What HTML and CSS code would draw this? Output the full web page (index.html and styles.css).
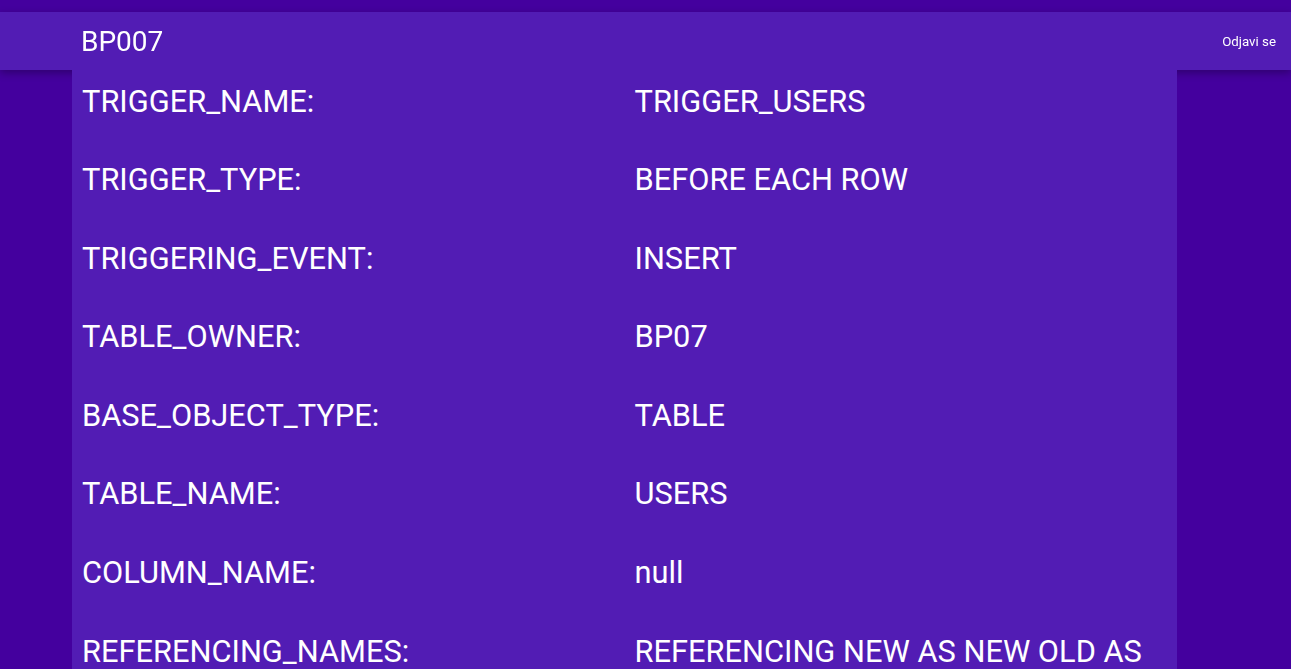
FILE: index.html
```html
<!DOCTYPE html>
<html lang="sr">
<head>
<meta charset="utf-8">
<title>BP007</title>
<link rel="stylesheet" href="styles.css">
</head>
<body>
<header class="topbar">
  <div class="brand">BP007</div>
  <a class="logout" href="#">Odjavi se</a>
</header>
<main class="card">
  <div class="grid">
    <div class="cell">TRIGGER_NAME:</div><div class="cell">TRIGGER_USERS</div>
    <div class="cell">TRIGGER_TYPE:</div><div class="cell">BEFORE EACH ROW</div>
    <div class="cell">TRIGGERING_EVENT:</div><div class="cell">INSERT</div>
    <div class="cell">TABLE_OWNER:</div><div class="cell">BP07</div>
    <div class="cell">BASE_OBJECT_TYPE:</div><div class="cell">TABLE</div>
    <div class="cell">TABLE_NAME:</div><div class="cell">USERS</div>
    <div class="cell">COLUMN_NAME:</div><div class="cell">null</div>
    <div class="cell">REFERENCING_NAMES:</div><div class="cell">REFERENCING NEW AS NEW OLD AS OLD</div>
    <div class="cell">WHEN_CLAUSE:</div><div class="cell">null</div>
    <div class="cell">STATUS:</div><div class="cell">ENABLED</div>
  </div>
</main>
</body>
</html>
```

FILE: styles.css
```css
html, body {
  margin: 0;
  padding: 0;
  background: #44009e;
  font-family: Roboto, "Liberation Sans", sans-serif;
  color: #ffffff;
}

.topbar {
  position: fixed;
  top: 12px;
  left: 0;
  right: 0;
  height: 58px;
  background: #521cb4;
  display: flex;
  align-items: center;
  justify-content: space-between;
  padding: 0 15px 0 81px;
  box-sizing: border-box;
  box-shadow: 0 3px 8px rgba(0, 0, 0, 0.3);
  z-index: 10;
}

.brand {
  font-size: 28px;
  line-height: 1;
  padding-top: 1px;
}

.logout {
  color: #ffffff;
  text-decoration: none;
  font-size: 13.3px;
  padding-top: 1px;
}

.card {
  position: relative;
  z-index: 11;
  margin: 70px 0 0 72px;
  width: 1105px;
  background: #521cb4;
  min-height: 800px;
}

.grid {
  display: grid;
  grid-template-columns: 1fr 1fr;
  margin-top: -7.5px;
}

.cell {
  font-size: 30.8px;
  line-height: 38.6px;
  padding: 20px 10px;
}
```
